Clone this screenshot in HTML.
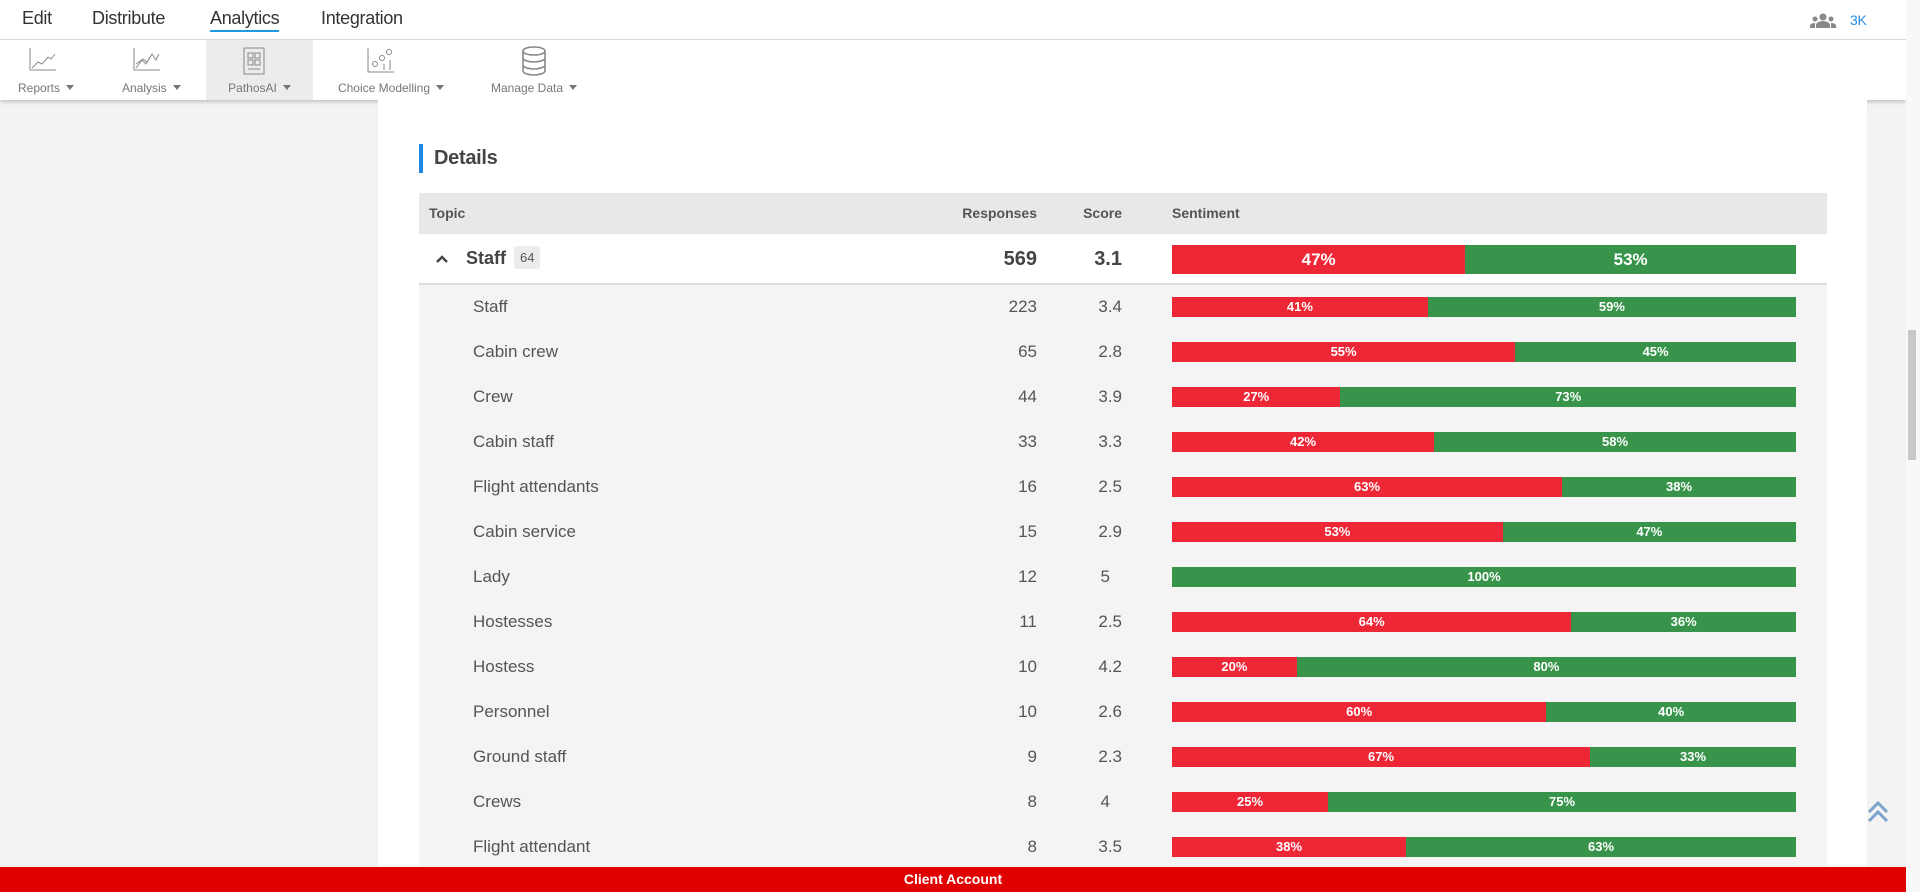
<!DOCTYPE html>
<html><head><meta charset="utf-8"><style>
*{box-sizing:border-box;margin:0;padding:0}
body{width:1920px;height:892px;overflow:hidden;background:#f3f3f3;font-family:"Liberation Sans",sans-serif;color:#555;position:relative}
.top{position:absolute;left:0;top:0;width:1906px;height:40px;background:#fff;border-bottom:1px solid #ddd}
.top span{position:absolute;top:8px;font-size:18px;color:#333;letter-spacing:-0.3px}
.tb{position:absolute;left:0;top:40px;width:1906px;height:60px;background:#fff;box-shadow:0 2px 4px rgba(0,0,0,.2)}
.ti{position:absolute;top:0;height:60px;text-align:center;font-size:12px;color:#777}
.ti svg{position:absolute;top:6px}
.ti .l{position:absolute;top:41px;left:0;right:0;white-space:nowrap}
.car{display:inline-block;border-left:4px solid transparent;border-right:4px solid transparent;border-top:5px solid #777;margin-left:6px;vertical-align:2px}
.panel{position:absolute;left:378px;top:100px;width:1489px;height:767px;background:#fff}
.sb{position:absolute;left:1906px;top:0;width:14px;height:892px;background:#f8f8f8}
.thumb{position:absolute;left:1908px;top:330px;width:8px;height:130px;background:#c8c8c8}
.red{position:absolute;left:0;top:867px;width:1906px;height:25px;background:#e00000;color:#fff;font-weight:bold;font-size:14px;text-align:center;line-height:25px}
.det{position:absolute;left:419px;top:144px;width:4px;height:29px;background:#1e88e5}
.dt{position:absolute;left:434px;top:147px;font-size:20px;font-weight:bold;color:#444;letter-spacing:-0.3px}
.hdr{position:absolute;left:419px;top:193px;width:1408px;height:41px;background:#e8e8e8;font-size:14px;font-weight:bold;color:#555}
.hdr span{position:absolute;top:12px}
.row{position:absolute;left:419px;width:1408px;height:45px;background:#f4f4f4;font-size:17px}
.row .n{position:absolute;left:54px;top:12px}
.row .r{position:absolute;right:790px;top:12px}
.row .s{position:absolute;right:705px;top:12px}
.bar{position:absolute;left:753px;top:12px;width:624px;height:20px;display:flex;font-size:13px;font-weight:bold;color:#fff;line-height:20px;text-align:center}
.bar .a{background:#ee2737}.bar .b{background:#38944a}
</style></head><body>
<div class="top">
<span style="left:22px">Edit</span>
<span style="left:92px">Distribute</span>
<span style="left:210px;border-bottom:2px solid #1e9be0;padding-bottom:1px">Analytics</span>
<span style="left:321px">Integration</span>
<svg style="position:absolute;left:1810px;top:13px" width="26" height="15" viewBox="0 0 26 15"><circle cx="13" cy="4" r="3.5" fill="#888"/><path d="M6 15v-3c0-2 3-4 7-4s7 2 7 4v3z" fill="#888"/><circle cx="5" cy="6" r="2.5" fill="#888"/><circle cx="21" cy="6" r="2.5" fill="#888"/><path d="M0 15v-2c0-2 2-3 5-3v5zM26 15v-2c0-2-2-3-5-3v5z" fill="#888"/></svg>
<span style="left:1850px;top:12px;font-size:14px;color:#2a8ce0">3K</span>
</div>
<div class="tb">
<div class="ti" style="left:18px;width:72px"><svg style="left:10px" width="30" height="26" viewBox="0 0 30 26"><path d="M2 2v22h26" stroke="#888" fill="none"/><path d="M4 22l6-6 4 2 6-7 3 2 4-5" stroke="#888" fill="none"/></svg><div class="l" style="text-align:left">Reports<i class="car"></i></div></div>
<div class="ti" style="left:122px;width:72px"><svg style="left:10px" width="30" height="26" viewBox="0 0 30 26"><path d="M2 2v22h26" stroke="#888" fill="none"/><path d="M4 22l6-8 4 4 6-10 4 6 3-6M4 18l7-5 4 3 5-8" stroke="#888" fill="none"/></svg><div class="l" style="text-align:left">Analysis<i class="car"></i></div></div>
<div class="ti" style="left:206px;width:107px;background:#ececec"><svg style="left:34px" width="28" height="30" viewBox="0 0 28 30"><rect x="4" y="2" width="20" height="26" stroke="#888" fill="none"/><rect x="8" y="7" width="5" height="5" stroke="#888" fill="none"/><rect x="15" y="7" width="5" height="5" stroke="#888" fill="none"/><rect x="8" y="14" width="5" height="5" stroke="#888" fill="none"/><rect x="15" y="14" width="5" height="5" stroke="#888" fill="none"/><path d="M8 23h12" stroke="#888"/></svg><div class="l">PathosAI<i class="car"></i></div></div>
<div class="ti" style="left:332px;width:118px"><svg style="left:34px" width="30" height="28" viewBox="0 0 30 28"><path d="M2 2v24h26" stroke="#888" fill="none"/><circle cx="9" cy="18" r="2.5" stroke="#888" fill="none"/><circle cx="16" cy="12" r="2.5" stroke="#888" fill="none"/><circle cx="23" cy="6" r="2.5" stroke="#888" fill="none"/><path d="M18 24v-6M24 24v-10" stroke="#888"/></svg><div class="l">Choice Modelling<i class="car"></i></div></div>
<div class="ti" style="left:484px;width:100px"><svg style="left:37px" width="26" height="30" viewBox="0 0 26 30"><ellipse cx="13" cy="5" rx="11" ry="4" stroke="#888" fill="none" stroke-width="1.6"/><path d="M2 5v20c0 2 5 4 11 4s11-2 11-4V5M2 12c0 2 5 4 11 4s11-2 11-4M2 19c0 2 5 4 11 4s11-2 11-4" stroke="#888" fill="none" stroke-width="1.6"/></svg><div class="l">Manage Data<i class="car"></i></div></div>
</div>
<div class="panel"></div>
<div class="det"></div><div class="dt">Details</div>
<div class="hdr"><span style="left:10px">Topic</span><span style="right:790px">Responses</span><span style="right:705px">Score</span><span style="left:753px">Sentiment</span></div>
<div class="row" style="top:234px;height:51px;background:#fff;border-bottom:2px solid #ddd;font-weight:bold;font-size:18px;color:#444">
<svg style="position:absolute;left:16px;top:20px" width="14" height="10" viewBox="0 0 14 10"><path d="M2 8l5-5 5 5" stroke="#444" stroke-width="2.4" fill="none"/></svg>
<span style="position:absolute;left:47px;top:14px">Staff</span>
<span style="position:absolute;left:95px;top:12px;background:#ececec;border-radius:3px;padding:4px 6px;font-size:13px;font-weight:normal;color:#555">64</span>
<span style="position:absolute;right:790px;top:14px;font-size:20px">569</span>
<span style="position:absolute;right:705px;top:14px;font-size:20px">3.1</span>
<div class="bar" style="top:11px;height:29px;line-height:29px;font-size:17px"><div class="a" style="width:47%">47%</div><div class="b" style="width:53%">53%</div></div>
</div>
<div id="rows"></div>
<div class="row" style="top:285px"><span class="n">Staff</span><span class="r">223</span><span class="s">3.4</span><div class="bar"><div class="a" style="width:41%">41%</div><div class="b" style="width:59%">59%</div></div></div>
<div class="row" style="top:330px"><span class="n">Cabin crew</span><span class="r">65</span><span class="s">2.8</span><div class="bar"><div class="a" style="width:55%">55%</div><div class="b" style="width:45%">45%</div></div></div>
<div class="row" style="top:375px"><span class="n">Crew</span><span class="r">44</span><span class="s">3.9</span><div class="bar"><div class="a" style="width:27%">27%</div><div class="b" style="width:73%">73%</div></div></div>
<div class="row" style="top:420px"><span class="n">Cabin staff</span><span class="r">33</span><span class="s">3.3</span><div class="bar"><div class="a" style="width:42%">42%</div><div class="b" style="width:58%">58%</div></div></div>
<div class="row" style="top:465px"><span class="n">Flight attendants</span><span class="r">16</span><span class="s">2.5</span><div class="bar"><div class="a" style="width:62.5%">63%</div><div class="b" style="width:37.5%">38%</div></div></div>
<div class="row" style="top:510px"><span class="n">Cabin service</span><span class="r">15</span><span class="s">2.9</span><div class="bar"><div class="a" style="width:53%">53%</div><div class="b" style="width:47%">47%</div></div></div>
<div class="row" style="top:555px"><span class="n">Lady</span><span class="r">12</span><span class="s" style="right:717px">5</span><div class="bar"><div class="b" style="width:100%">100%</div></div></div>
<div class="row" style="top:600px"><span class="n">Hostesses</span><span class="r">11</span><span class="s">2.5</span><div class="bar"><div class="a" style="width:64%">64%</div><div class="b" style="width:36%">36%</div></div></div>
<div class="row" style="top:645px"><span class="n">Hostess</span><span class="r">10</span><span class="s">4.2</span><div class="bar"><div class="a" style="width:20%">20%</div><div class="b" style="width:80%">80%</div></div></div>
<div class="row" style="top:690px"><span class="n">Personnel</span><span class="r">10</span><span class="s">2.6</span><div class="bar"><div class="a" style="width:60%">60%</div><div class="b" style="width:40%">40%</div></div></div>
<div class="row" style="top:735px"><span class="n">Ground staff</span><span class="r">9</span><span class="s">2.3</span><div class="bar"><div class="a" style="width:67%">67%</div><div class="b" style="width:33%">33%</div></div></div>
<div class="row" style="top:780px"><span class="n">Crews</span><span class="r">8</span><span class="s" style="right:717px">4</span><div class="bar"><div class="a" style="width:25%">25%</div><div class="b" style="width:75%">75%</div></div></div>
<div class="row" style="top:825px;height:42px"><span class="n">Flight attendant</span><span class="r">8</span><span class="s">3.5</span><div class="bar"><div class="a" style="width:37.5%">38%</div><div class="b" style="width:62.5%">63%</div></div></div>
<svg style="position:absolute;left:1866px;top:800px" width="24" height="24" viewBox="0 0 24 24"><path d="M3 12l9-9 9 9M3 21l9-9 9 9" stroke="#7ba3cc" stroke-width="3" fill="none"/></svg>
<div class="red">Client Account</div>
<div class="sb"></div><div class="thumb"></div>
</body></html>
